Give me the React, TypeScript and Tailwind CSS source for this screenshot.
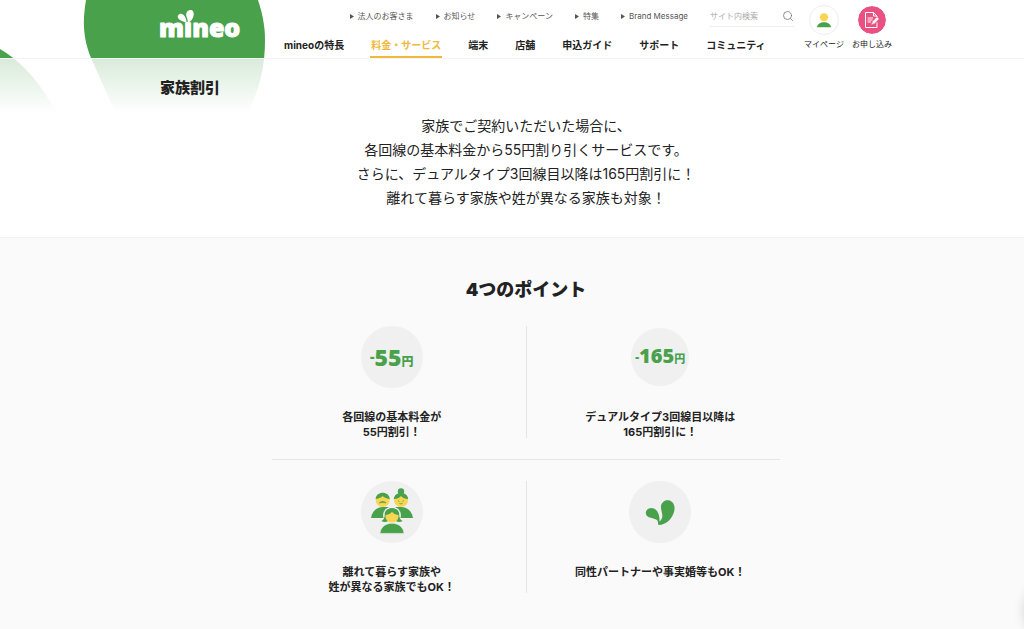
import React from 'react';
import { Search } from 'lucide-react';

interface NavItem {
    label: string;
    active?: boolean;
}

interface Point {
    id: number;
    lines: string[];
    icon: React.ReactNode;
}

const subLinks: string[] = ['法人のお客さま', 'お知らせ', 'キャンペーン', '特集', 'Brand Message'];

const navItems: NavItem[] = [
    { label: 'mineoの特長' },
    { label: '料金・サービス', active: true },
    { label: '端末' },
    { label: '店舗' },
    { label: '申込ガイド' },
    { label: 'サポート' },
    { label: 'コミュニティ' }
];

const LEFT_PETAL = 'M-400 10 C-160 -10 -50 16 0 49 C24 63 43 86 58 116 L-400 116 Z';
const MAIN_PETAL = 'M86 0 C83 18 82 36 91 58 L117 116 L246 116 C260 90 265 66 265 40 C265 25 262 12 258 0 Z';

function Logo() {
    return (
        <svg viewBox="1 0 84 40" className="w-[84px] h-10 overflow-visible" role="img" aria-label="mineo">
            <text
                x="0"
                y="29"
                fontFamily="'Open Sans', sans-serif"
                fontWeight="800"
                fontSize="25"
                fill="#fff"
                stroke="#fff"
                strokeWidth="1"
                strokeLinejoin="round"
            >
                mineo
            </text>
            {/* The two leaves take the place of the dot */}
            <rect x="22" y="4" width="13" height="10" fill="#49a14c" />
            <path d="M27.8 15.6 C26.4 13.8 23.6 13.4 21 12 C18.2 10.4 18 7 20.6 6 C24.6 5 27.4 9.6 27.8 15.6 Z" fill="#fff" />
            <path d="M28.4 15.6 C29.8 11.6 26.8 9 27.2 6 C27.8 1.6 33 .8 34.4 4 C35.8 8.4 32.8 13 28.4 15.6 Z" fill="#fff" />
        </svg>
    );
}

function PersonIcon() {
    return (
        <svg viewBox="0 0 16 16" className="w-4 h-4">
            <circle cx="8" cy="5.3" r="4" fill="#fad551" />
            <path d="M1 15.2 C1.5 8.6 14.5 8.6 15 15.2 Z" fill="#49a14c" />
        </svg>
    );
}

function ApplyIcon() {
    return (
        <svg viewBox="0 0 16 18" className="w-4 h-[18px]" fill="none" stroke="#fff" strokeWidth="1">
            <path d="M13 11.5 V16.5 H1.5 V1.5 H9.5 L13 5 V6" />
            <path d="M9.5 1.5 V5 H13" />
            <path d="M3.5 7 H9 M3.5 9 H8.5 M3.5 11 H7" />
            <path d="M9 12 L14 7" strokeWidth="2.6" />
            <path d="M7.4 13.6 L8 11.4 L9.6 13 Z" fill="#fff" stroke="none" />
        </svg>
    );
}

function FamilyIcon() {
    return (
        <svg viewBox="0 0 44 48" className="w-11 h-12">
            {/* Parents */}
            <path d="M1 30 C2 23 7 19 13 19 L20 19 L20 30 Z" fill="#49a14c" />
            <path d="M43 30 C42 23 37 19 31 19 L24 19 L24 30 Z" fill="#49a14c" />
            <circle cx="12.7" cy="12" r="7" fill="#fad551" />
            <path d="M5.6 11 C6.2 2.6 19.2 2.6 19.8 11 C16 10.4 14 9.6 12.7 8 C11.4 9.6 9.4 10.4 5.6 11 Z" fill="#49a14c" />
            <path d="M9.4 15 C10.2 13 15.2 13 16 15 C14 14.4 11.4 14.4 9.4 15 Z" fill="#49a14c" stroke="#49a14c" strokeWidth="0.6" />
            <circle cx="31" cy="12" r="7" fill="#fad551" />
            <circle cx="31" cy="3.4" r="3.2" fill="#49a14c" />
            <path d="M23.8 11 C24.4 3 37.6 3 38.2 11 C35 11 32.6 9.8 31 8 C29.4 9.8 27 11 23.8 11 Z" fill="#49a14c" />
            <path d="M28 12.6 l1.4 .8 M34 12.6 l-1.4 .8 M29.4 15.4 Q31 16.6 32.6 15.4" fill="none" stroke="#49a14c" strokeWidth="0.8" />
            {/* Child in front */}
            <circle cx="22" cy="27.4" r="9" fill="#f0f0f0" />
            <path d="M14.8 26 C14.8 18.4 29.2 18.4 29.2 26 C29.2 30 30.4 32 32.6 33 C30 34.6 26 34 25 32 L19 32 C18 34 14 34.6 11.4 33 C13.6 32 14.8 30 14.8 26 Z" fill="#49a14c" />
            <circle cx="22" cy="28" r="6.6" fill="#fad551" />
            <path d="M15 27 C14.6 18.4 29.4 18.4 29 27 C25.6 27 23.4 25.6 22 23.8 C20.6 25.6 18.4 27 15 27 Z" fill="#49a14c" />
            <path d="M10 45.4 C11 31.8 33 31.8 34 45.4 Z" fill="#49a14c" stroke="#f0f0f0" strokeWidth="0.6" />
        </svg>
    );
}

function LeafIcon() {
    return (
        <svg viewBox="0 0 30 27" className="w-[30px] h-[27px]" fill="#49a14c">
            <path d="M13.6 26 C12.8 25.4 13.4 23.4 12.4 21.6 C10 18.4 1 20 .8 14 C1 10 5.6 8 9 9.6 C14.6 12.4 14.6 20 14.6 22.4 C15 21.8 15.6 22 15.6 21.4 C19.6 16.8 15.4 12 16 7 C17 2 21.6 .4 25.2 1.8 C29.4 3.8 30.4 8.6 29 13 C27 19.4 21.6 26 13.6 26 Z" />
        </svg>
    );
}

const points: Point[] = [
    {
        id: 1,
        lines: ['各回線の基本料金が', '55円割引！'],
        icon: (
            <span className="flex w-[62px] h-[62px] items-center justify-center rounded-full bg-[#f0f0f0] font-['Open_Sans','Noto_Sans_CJK_JP',sans-serif] font-extrabold text-[#49a14c]">
                <span className="flex items-baseline leading-6">
                    <span className="self-center text-sm leading-6">-</span>
                    <span className="text-[23px]">55</span>
                    <span className="text-xs">円</span>
                </span>
            </span>
        )
    },
    {
        id: 2,
        lines: ['デュアルタイプ3回線目以降は', '165円割引に！'],
        icon: (
            <span className="flex w-[58px] h-[58px] items-center justify-center rounded-full bg-[#f0f0f0] font-['Open_Sans','Noto_Sans_CJK_JP',sans-serif] font-extrabold text-[#49a14c]">
                <span className="flex items-baseline leading-6">
                    <span className="self-center text-xs leading-6">-</span>
                    <span className="text-xl leading-6">165</span>
                    <span className="text-[11px]">円</span>
                </span>
            </span>
        )
    },
    {
        id: 3,
        lines: ['離れて暮らす家族や', '姓が異なる家族でもOK！'],
        icon: (
            <span className="flex w-[62px] h-[62px] items-center justify-center rounded-full bg-[#f0f0f0]">
                <FamilyIcon />
            </span>
        )
    },
    {
        id: 4,
        lines: ['同性パートナーや事実婚等もOK！'],
        icon: (
            <span className="flex w-[62px] h-[62px] items-center justify-center rounded-full bg-[#f0f0f0]">
                <LeafIcon />
            </span>
        )
    }
];

function Header() {
    return (
        <header className="overflow-hidden border-b border-[#f3f3f3] pl-7">
            <div className="relative mx-auto flex h-[58px] max-w-[732px]">
                <svg viewBox="0 0 280 58" className="absolute -left-40 top-0 w-[280px] h-[58px] overflow-visible" fill="#49a14c" aria-hidden="true">
                    <path d={LEFT_PETAL} />
                    <path d={MAIN_PETAL} />
                </svg>
                <a href="#" className="relative w-[123px] shrink-0 pt-2">
                    <Logo />
                </a>

                <div className="relative flex-1">
                    <div className="flex h-8 items-center justify-end gap-[22px]">
                        {subLinks.map((label) => (
                            <a key={label} href="#" className="flex items-center gap-1 whitespace-nowrap text-[8px] text-[#555]">
                                <svg viewBox="0 0 4 5" className="w-1 h-[5px]" fill="#555">
                                    <path d="M0 0 L4 2.5 L0 5 Z" />
                                </svg>
                                {label}
                            </a>
                        ))}
                        <form className="flex h-[22px] w-[84px] items-center border-b border-[#eee]">
                            <input
                                type="text"
                                aria-label="サイト内検索"
                                placeholder="サイト内検索"
                                className="min-w-0 flex-1 text-[8px] outline-none placeholder:text-[#aaa]"
                            />
                            <button type="button" aria-label="検索">
                                <Search className="w-3 h-3 text-[#777]" strokeWidth={1.6} />
                            </button>
                        </form>
                    </div>
                    <nav className="flex h-[26px] gap-[25px]">
                        {navItems.map((item) => (
                            <a
                                key={item.label}
                                href="#"
                                className={`flex items-center whitespace-nowrap border-b-2 px-px pt-[3px] text-[10px] font-bold ${item.active ? 'border-[#f0b93a] text-[#f0b93a]' : 'border-transparent'}`}
                            >
                                {item.label}
                            </a>
                        ))}
                    </nav>
                </div>

                <div className="relative ml-[10px] flex gap-2 pt-[5px] text-[8px] leading-[10px]">
                    <a href="#" className="flex w-10 flex-col items-center gap-1 whitespace-nowrap">
                        <span className="flex w-[30px] h-[30px] items-center justify-center rounded-full border border-[#eee]">
                            <PersonIcon />
                        </span>
                        マイページ
                    </a>
                    <a href="#" className="flex w-10 flex-col items-center gap-1 whitespace-nowrap">
                        <span className="flex w-[30px] h-[30px] items-center justify-center rounded-full border border-white bg-[#eb5082] bg-clip-padding">
                            <ApplyIcon />
                        </span>
                        お申し込み
                    </a>
                </div>
            </div>
        </header>
    );
}

export default function App() {
    return (
        <div className="min-h-screen bg-[#fafafa] text-[#222] font-['Inter','Noto_Sans_CJK_JP',sans-serif]">
            <div className="bg-white">
                <Header />
                <section className="overflow-hidden pl-7">
                    <div className="relative mx-auto max-w-[732px] pt-[17px] pb-[27px]">
                        <svg viewBox="0 59 280 54" className="absolute -left-40 top-0 w-[280px] h-[54px]" overflow="visible" aria-hidden="true">
                            <defs>
                                <linearGradient id="petalFade" gradientUnits="userSpaceOnUse" x1="0" y1="59" x2="0" y2="113">
                                    <stop offset="0" stopColor="#d9ebda" />
                                    <stop offset="1" stopColor="#fff" />
                                </linearGradient>
                                <clipPath id="petalClip">
                                    <rect x="-400" y="59" width="700" height="54" />
                                </clipPath>
                            </defs>
                            <g fill="url(#petalFade)" clipPath="url(#petalClip)">
                                <path d={LEFT_PETAL} />
                                <path d={MAIN_PETAL} />
                            </g>
                        </svg>
                        <h1 className="relative text-[15px] leading-6 font-black">家族割引</h1>
                        <p className="relative mt-[14px] text-center text-sm leading-6">
                            家族でご契約いただいた場合に、<br />
                            各回線の基本料金から55円割り引くサービスです。<br />
                            さらに、デュアルタイプ3回線目以降は165円割引に！<br />
                            離れて暮らす家族や姓が異なる家族も対象！
                        </p>
                    </div>
                </section>
            </div>

            <section className="border-t border-[#f3f3f3] pl-7 pt-[38px] pb-9">
                <h2 className="text-center text-lg leading-7 font-black">4つのポイント</h2>
                <div className="mx-auto mt-[22px] max-w-[508px]">
                    {[points.slice(0, 2), points.slice(2)].map(([first, second], index) => (
                        <div
                            key={first.id}
                            className={`grid grid-cols-[1fr_1px_1fr] gap-x-[14px] ${index > 0 ? 'border-t border-[#e5e5e5] pt-[21px]' : 'pb-[19px]'}`}
                        >
                            <PointCell point={first} />
                            <div className="mb-0.5 bg-[#e5e5e5]" />
                            <PointCell point={second} />
                        </div>
                    ))}
                </div>
            </section>

            {/* Page-top button, parked just outside the right edge */}
            <div className="fixed -right-14 -bottom-2.5 w-14 h-14 rounded-full bg-white shadow-[0_0_12px_rgba(0,0,0,0.15)]" />
        </div>
    );
}

function PointCell({ point }: { point: Point }) {
    return (
        <div className="flex flex-col items-center">
            <div className="flex h-[62px] items-center">{point.icon}</div>
            <p className="mt-[22px] whitespace-nowrap text-center text-[11px] leading-[15px] font-bold">
                {point.lines.map((line) => (
                    <span key={line} className="block">{line}</span>
                ))}
            </p>
        </div>
    );
}
